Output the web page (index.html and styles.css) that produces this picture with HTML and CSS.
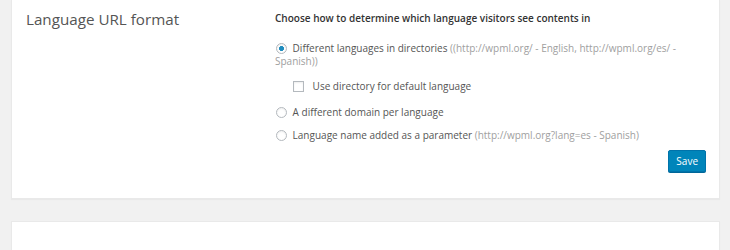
FILE: index.html
```html
<!DOCTYPE html>
<html lang="en">
<head>
  <meta charset="UTF-8">
  <title>Language URL format</title>
  <link rel="stylesheet" href="styles.css">
</head>
<body>
  <div class="box">
    <h3 class="box-title">Language URL format</h3>
    <div class="box-content">
      <p class="intro">Choose how to determine which language visitors see contents in</p>
      <ul class="options">
        <li>
          <label class="opt"><input type="radio" name="url_format" checked> Different languages in directories <span class="hint">((http://wpml.org/ - English, http://wpml.org/es/ - Spanish))</span></label>
          <label class="opt sub"><input type="checkbox"> Use directory for default language</label>
        </li>
        <li><label class="opt"><input type="radio" name="url_format"> A different domain per language</label></li>
        <li><label class="opt"><input type="radio" name="url_format"> Language name added as a parameter <span class="hint">(http://wpml.org?lang=es - Spanish)</span></label></li>
      </ul>
      <div class="actions"><button class="button-primary">Save</button></div>
    </div>
  </div>

  <div class="box next"></div>
</body>
</html>
```

FILE: styles.css
```css
body { margin: 0; padding: 0 10px 0 11px; background: #f1f1f1; font-family: "Open Sans", sans-serif; color: #444; overflow: hidden; }
.box { background: #fff; border: 1px solid #e9e9e9; border-top: none; box-shadow: 0 1px 1px rgba(0,0,0,.03); display: flex; padding: 9px 14px 26px 14px; }
.box.next { margin-top: 22px; height: 60px; border-top: 1px solid #e9e9e9; }
.box-title { width: 249px; margin: 0; font-size: 15.2px; font-weight: 400; color: #555; line-height: 20px; }
.box-content { flex: 1; font-size: 10px; line-height: 13px; }
.intro { margin: 3px 0 17px; font-weight: 600; color: #333; }
.options { list-style: none; margin: 0; padding: 0; }
.options li { margin-bottom: 10px; }
.options li:first-child { margin-bottom: 13px; }
.options li:last-child { margin-bottom: 8px; }
.opt { display: block; color: #555; }
.opt.sub { margin: 12px 0 0 17px; }
.hint { color: #a0a0a0; }
input[type=radio], input[type=checkbox] { appearance: none; margin: 0 3px 0 1px; width: 11px; height: 11px; border: 1px solid #b4b9be; background: #fff; vertical-align: -2px; box-shadow: inset 0 1px 2px rgba(0,0,0,.07); box-sizing: border-box; }
input[type=radio] { border-radius: 50%; }
input[type=radio]:checked { background: radial-gradient(circle, #1e8cbe 0 2.2px, #fff 2.7px); }
input[type=checkbox] { border-radius: 0; margin-right: 6px; }
.actions { text-align: right; padding-right: 0; }
.button-primary { background: #0085ba; border: 1px solid #0073aa; color: #fff; font-family: "Open Sans", sans-serif; font-size: 10px; height: 22px; padding: 0 7px; border-radius: 2px; box-shadow: 0 1px 0 #006799; cursor: pointer; margin-right: -1px; }
```
